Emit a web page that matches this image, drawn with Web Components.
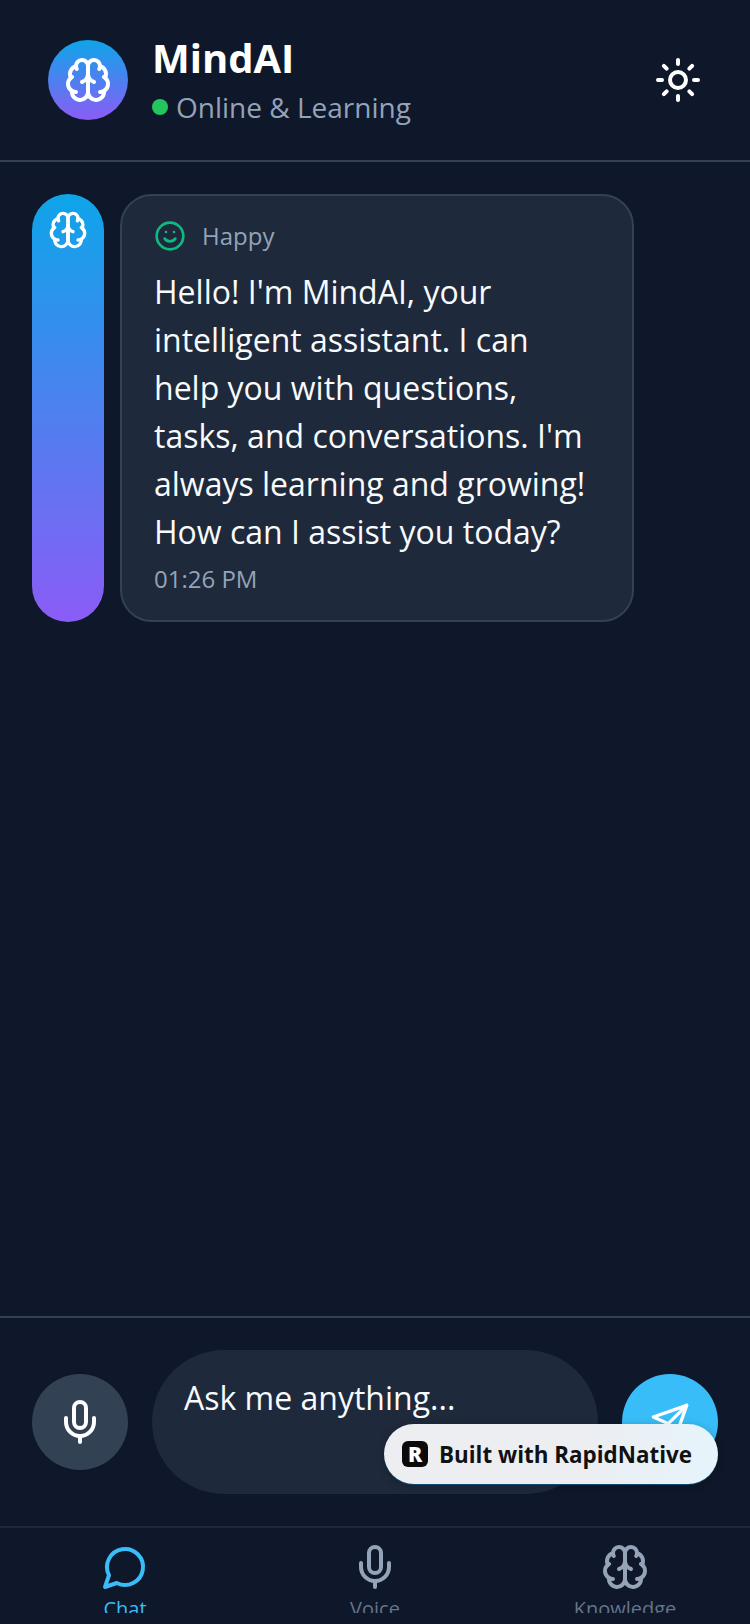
<!DOCTYPE html>
<html>
<head>
<meta charset="utf-8">
<title>MindAI</title>
<style>
    html, body { margin: 0; height: 100%; background: #0f172a; }
    body { font-family: "Open Sans", sans-serif; overflow: hidden; }
    mind-app { height: 1624px; }
</style>
</head>
<body>
<mind-app></mind-app>

<script>
// Icon paths, all on a 24x24 grid
const ICONS = {
    brain: '<path d="M12 5a3 3 0 1 0-5.997.125 4 4 0 0 0-2.526 5.77 4 4 0 0 0 .556 6.588A4 4 0 1 0 12 18Z"/><path d="M12 5a3 3 0 1 1 5.997.125 4 4 0 0 1 2.526 5.77 4 4 0 0 1-.556 6.588A4 4 0 1 1 12 18Z"/><path d="M15 13a4.5 4.5 0 0 1-3-4 4.5 4.5 0 0 1-3 4"/><path d="M12 9v9"/><path d="M17.599 6.5a3 3 0 0 0 .399-1.375"/><path d="M6.003 5.125A3 3 0 0 0 6.401 6.5"/><path d="M3.477 10.896a4 4 0 0 1 .585-.396"/><path d="M19.938 10.5a4 4 0 0 1 .585.396"/><path d="M6 18a4 4 0 0 1-1.967-.516"/><path d="M19.967 17.484A4 4 0 0 1 18 18"/>',
    sun: '<circle cx="12" cy="12" r="4"/><path d="M12 2v2M12 20v2M4.93 4.93l1.41 1.41M17.66 17.66l1.41 1.41M2 12h2M20 12h2M6.34 17.66l-1.41 1.41M19.07 4.93l-1.41 1.41"/>',
    smile: '<circle cx="12" cy="12" r="10"/><path d="M8 14s1.5 2 4 2 4-2 4-2"/><path d="M9 9h.01M15 9h.01"/>',
    mic: '<path d="M12 2a3 3 0 0 0-3 3v7a3 3 0 0 0 6 0V5a3 3 0 0 0-3-3Z"/><path d="M19 10v2a7 7 0 0 1-14 0v-2"/><path d="M12 19v3"/>',
    send: '<path d="m22 2-7 20-4-9-9-4Z"/><path d="M22 2 11 13"/>',
    chat: '<path d="M7.9 20A9 9 0 1 0 4 16.1L2 22Z"/>'
};

// Small inline icon: <app-icon name="sun" size="48" color="#fff">
class AppIcon extends HTMLElement {
    connectedCallback() {
        const size = this.getAttribute('size') || 24;
        const color = this.getAttribute('color') || 'currentColor';
        this.attachShadow({ mode: 'open' });
        this.shadowRoot.innerHTML = `
            <style>
                :host { display: block; width: ${size}px; height: ${size}px; flex: none; }
                svg { display: block; }
            </style>
            <svg width="${size}" height="${size}" viewBox="0 0 24 24" fill="none" stroke="${color}"
                 stroke-width="2" stroke-linecap="round" stroke-linejoin="round">${ICONS[this.getAttribute('name')]}</svg>
        `;
    }
}
customElements.define('app-icon', AppIcon);

// Top bar with avatar, name, status and theme toggle
class AppHeader extends HTMLElement {
    constructor() {
        super();
        this.attachShadow({ mode: 'open' });
        this.shadowRoot.innerHTML = `
            <style>
                :host {
                    display: flex;
                    flex: none;
                    align-items: center;
                    height: 160px;
                    padding: 0 48px;
                    border-bottom: 2px solid #334155;
                    gap: 24px;
                }
                .avatar {
                    width: 80px; height: 80px; border-radius: 50%;
                    background: linear-gradient(#0ea5e9, #8b5cf6);
                    display: flex; align-items: center; justify-content: center;
                }
                .info { flex: 1; padding-bottom: 2px; }
                h1 { margin: 0; font-size: 40px; line-height: 48px; font-weight: 700; color: #fff; }
                .status { display: flex; align-items: center; gap: 8px; margin-top: 7px; font-size: 28px; line-height: 36px; color: #94a3b8; }
                .dot { width: 16px; height: 16px; border-radius: 50%; background: #22c55e; }
            </style>
            <div class="avatar"><app-icon name="brain" size="48" color="#fff"></app-icon></div>
            <div class="info">
                <h1>MindAI</h1>
                <div class="status"><span class="dot"></span>Online &amp; Learning</div>
            </div>
            <app-icon name="sun" size="48" color="#fff"></app-icon>
        `;
    }
}
customElements.define('app-header', AppHeader);

// Assistant message: gradient strip, bubble with mood, body and time
class ChatMessage extends HTMLElement {
    constructor() {
        super();
        this.attachShadow({ mode: 'open' });
        this.shadowRoot.innerHTML = `
            <style>
                :host { display: flex; gap: 16px; align-items: stretch; }
                .strip {
                    width: 72px; flex: none; border-radius: 36px; padding-top: 16px; box-sizing: border-box;
                    background: linear-gradient(#0ea5e9, #8b5cf6);
                    display: flex; justify-content: center;
                }
                .bubble {
                    width: 514px; box-sizing: border-box;
                    padding: 24px 32px 25px;
                    background: #1e293b;
                    border: 2px solid #334155;
                    border-radius: 32px;
                }
                .mood { display: flex; align-items: center; gap: 16px; font-size: 24px; line-height: 32px; color: #94a3b8; margin-bottom: 16px; }
                .body { font-size: 32px; line-height: 48px; color: #f8fafc; }
                .time { font-size: 24px; line-height: 32px; color: #94a3b8; margin-top: 7px; }
            </style>
            <div class="strip"><app-icon name="brain" size="40" color="#fff"></app-icon></div>
            <div class="bubble">
                <div class="mood"><app-icon name="smile" size="32" color="#10b981"></app-icon><slot name="mood"></slot></div>
                <div class="body"><slot></slot></div>
                <div class="time"><slot name="time"></slot></div>
            </div>
        `;
    }
}
customElements.define('chat-message', ChatMessage);

// Input row with mic, text field, send and the floating badge
class ChatInput extends HTMLElement {
    constructor() {
        super();
        this.attachShadow({ mode: 'open' });
        this.shadowRoot.innerHTML = `
            <style>
                :host {
                    display: flex; flex: none; position: relative;
                    align-items: center; gap: 24px;
                    height: 210px; box-sizing: border-box;
                    padding: 32px;
                    border-top: 2px solid #334155;
                }
                .round {
                    width: 96px; height: 96px; border-radius: 50%; flex: none;
                    display: flex; align-items: center; justify-content: center;
                }
                .mic { background: #334155; }
                .send { background: #38bdf8; }
                .field {
                    flex: 1; height: 144px; box-sizing: border-box;
                    padding: 24px 32px;
                    border-radius: 72px;
                    background: #1e293b;
                    color: #f8fafc;
                    font-size: 32px; line-height: 48px;
                }
                .badge {
                    position: absolute; left: 384px; top: 106px;
                    width: 334px; height: 60px; box-sizing: border-box;
                    padding: 0 12px 0 18px;
                    display: flex; align-items: center; gap: 11px;
                    border-radius: 30px;
                    background: linear-gradient(100deg, #eceef2 0%, #eceef2 60%, #e6f4fc 100%);
                    box-shadow: 0 1px 0 #0c4a6e, 0 2px 8px rgba(0, 0, 0, .25);
                    color: #111;
                    font-size: 22.4px; font-weight: 700; white-space: nowrap;
                }
                .logo {
                    flex: none;
                    width: 26px; height: 26px; border-radius: 6px; background: #0a0a0a; color: #fff;
                    font-size: 21px; font-weight: 800; line-height: 26px; text-align: center;
                }
            </style>
            <div class="round mic"><app-icon name="mic" size="48" color="#fff"></app-icon></div>
            <div class="field">Ask me anything...</div>
            <div class="round send"><app-icon name="send" size="40" color="#fff"></app-icon></div>
            <div class="badge"><span class="logo">R</span>Built with RapidNative</div>
        `;
    }
}
customElements.define('chat-input', ChatInput);

// One tab of the bottom navigation
class NavItem extends HTMLElement {
    constructor() {
        super();
        this.attachShadow({ mode: 'open' });
        const color = this.hasAttribute('active') ? '#38bdf8' : '#94a3b8';
        this.shadowRoot.innerHTML = `
            <style>
                :host { display: flex; flex-direction: column; align-items: center; flex: 1; color: ${this.hasAttribute('active') ? '#38bdf8' : '#64748b'}; font-size: 20px; line-height: 28px; }
                span { margin-top: 4px; }
            </style>
            <app-icon name="${this.getAttribute('icon')}" size="48" color="${color}"></app-icon>
            <span><slot></slot></span>
        `;
    }
}
customElements.define('nav-item', NavItem);

class BottomNav extends HTMLElement {
    constructor() {
        super();
        this.attachShadow({ mode: 'open' });
        this.shadowRoot.innerHTML = `
            <style>
                :host { display: block; flex: none; height: 98px; box-sizing: border-box; padding-top: 15px; border-top: 2px solid #1e293b; }
                .tabs { display: flex; height: 70px; overflow: hidden; }
            </style>
            <div class="tabs"><slot></slot></div>
        `;
    }
}
customElements.define('bottom-nav', BottomNav);

// Page shell
class MindApp extends HTMLElement {
    constructor() {
        super();
        this.attachShadow({ mode: 'open' });
        this.shadowRoot.innerHTML = `
            <style>
                :host { display: flex; flex-direction: column; width: 750px; background: #0f172a; }
                .messages { flex: 1; padding: 32px; }
            </style>
            <app-header></app-header>
            <div class="messages">
                <chat-message>
                    <span slot="mood">Happy</span>
                    Hello! I'm MindAI, your intelligent assistant. I can help you with questions, tasks, and conversations. I'm always learning and growing! How can I assist you today?
                    <span slot="time">01:26 PM</span>
                </chat-message>
            </div>
            <chat-input></chat-input>
            <bottom-nav>
                <nav-item icon="chat" active>Chat</nav-item>
                <nav-item icon="mic">Voice</nav-item>
                <nav-item icon="brain">Knowledge</nav-item>
            </bottom-nav>
        `;
    }
}
customElements.define('mind-app', MindApp);
</script>
</body>
</html>
